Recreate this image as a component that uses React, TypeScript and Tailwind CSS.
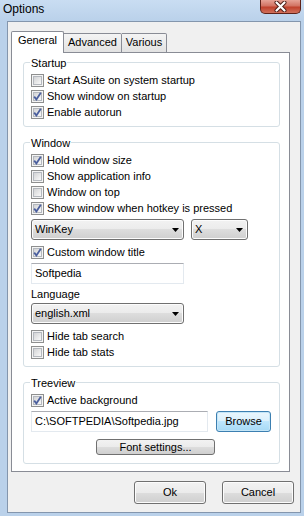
import React from 'react';

const Check = ({ checked, label }: { checked?: boolean; label: string }) => (
  <div className="flex items-center h-[16px] gap-[3px]">
    <span className="relative flex w-[13px] h-[13px] shrink-0 border border-[#8e8f8f] bg-[#f4f4f4] p-[1px]">
      <span className="flex-1 border border-[#b4b8be] bg-[linear-gradient(135deg,#d2d3d5,#f9f9f9)]" />
      {checked && (
        <svg className="absolute left-[-1px] top-[-1px]" width="13" height="13" viewBox="0 0 13 13">
          <path d="M3.2 6.6 L5.4 9.4 L9.8 2.8" fill="none" stroke="#4b5f9e" strokeWidth="1.8" />
        </svg>
      )}
    </span>
    <span className="leading-[16px]">{label}</span>
  </div>
);

const Arrow = () => (
  <svg width="7" height="4" viewBox="0 0 7 4">
    <path d="M0 0 H7 L3.5 4 Z" fill="#000" />
  </svg>
);

const Group = ({ title, className, children }: { title: string; className: string; children: React.ReactNode }) => (
  <div className={`ml-[11px] w-[257px] border border-[#d5dfe5] rounded-[3px] pl-[7px] ${className}`}>
    <span className="block w-fit -mt-[6px] -ml-px px-px bg-white leading-[13px]">{title}</span>
    <div className="mt-[2px]">{children}</div>
  </div>
);

export default function App() {
  return (
    <div className="w-[304px] h-[516px] bg-[#bad1ea] flex flex-col text-[11px] text-black font-['Liberation_Sans',Arial,sans-serif]">
      {/* title bar */}
      <div className="h-[21px] flex justify-between bg-[linear-gradient(#c9ddf2,#bad1ea)]">
        <span className="pl-[3px] pt-[2px] text-[12px] leading-[15px]">Options</span>
        <div className="mr-[3px] w-[41px] h-[14px] rounded-b-[5px] border border-t-0 border-[#5e2219] bg-[linear-gradient(#e6a396,#d27363_45%,#c0412c_55%,#d0705b)] flex items-center justify-center">
          <svg width="13" height="11" viewBox="0 0 13 11">
            <path d="M2.5 1.5 L10.5 9.5 M10.5 1.5 L2.5 9.5" stroke="#4a1b14" strokeWidth="4" strokeLinecap="round" />
            <path d="M2.5 1.5 L10.5 9.5 M10.5 1.5 L2.5 9.5" stroke="#fff" strokeWidth="2.2" strokeLinecap="round" />
          </svg>
        </div>
      </div>

      {/* client */}
      <div className="ml-[7px] w-[294px] h-[492px] border border-[#8496ad] bg-[#f0f0f0] pl-[3px] pt-[9px]">
        <div className="relative z-10 flex items-end h-[22px] -mb-px">
          <div className="w-[53px] h-[22px] bg-white border border-b-0 border-[#898c95] rounded-t-[2px] flex justify-center pt-[2px] leading-[13px]">
            General
          </div>
          <div className="w-[58px] h-[20px] border border-l-0 border-[#898c95] rounded-tr-[2px] bg-[linear-gradient(#f4f4f4,#e2e2e2)] flex justify-center pt-[2px] leading-[13px]">
            Advanced
          </div>
          <div className="w-[45px] h-[20px] border border-l-0 border-[#898c95] rounded-tr-[2px] bg-[linear-gradient(#f4f4f4,#e2e2e2)] flex justify-center pt-[2px] leading-[13px]">
            Various
          </div>
        </div>

        <div className="w-[279px] h-[420px] bg-white border border-[#898c95] pt-[9px]">
          <Group title="Startup" className="pb-[6px]">
            <Check label="Start ASuite on system startup" />
            <Check checked label="Show window on startup" />
            <Check checked label="Enable autorun" />
          </Group>

          <Group title="Window" className="mt-[15px] pb-[6px]">
            <Check checked label="Hold window size" />
            <Check label="Show application info" />
            <Check label="Window on top" />
            <Check checked label="Show window when hotkey is pressed" />
            <div className="flex gap-[7px] mt-[3px]">
              <div className="w-[153px] h-[21px] border border-[#707070] rounded-[3px] bg-[linear-gradient(#f2f2f2,#ebebeb_50%,#dddddd_50%,#cfcfcf)] shadow-[inset_0_0_0_1px_#fcfcfc] flex items-center justify-between pl-[3px] pr-[4px]">
                <span>WinKey</span>
                <Arrow />
              </div>
              <div className="w-[57px] h-[21px] border border-[#707070] rounded-[3px] bg-[linear-gradient(#f2f2f2,#ebebeb_50%,#dddddd_50%,#cfcfcf)] shadow-[inset_0_0_0_1px_#fcfcfc] flex items-center justify-between pl-[3px] pr-[4px]">
                <span>X</span>
                <Arrow />
              </div>
            </div>
            <div className="mt-[4px]">
              <Check checked label="Custom window title" />
            </div>
            <div className="mt-[3px] w-[153px] h-[21px] border border-[#e3e9ef] border-t-[#abadb3] bg-white flex items-center pl-[3px]">
              Softpedia
            </div>
            <div className="mt-[4px] leading-[13px]">Language</div>
            <div className="mt-[2px] w-[153px] h-[21px] border border-[#707070] rounded-[3px] bg-[linear-gradient(#f2f2f2,#ebebeb_50%,#dddddd_50%,#cfcfcf)] shadow-[inset_0_0_0_1px_#fcfcfc] flex items-center justify-between pl-[3px] pr-[4px]">
              <span>english.xml</span>
              <Arrow />
            </div>
            <div className="mt-[4px]">
              <Check label="Hide tab search" />
              <Check label="Hide tab stats" />
            </div>
          </Group>

          <Group title="Treeview" className="mt-[15px] pb-[8px]">
            <Check checked label="Active background" />
            <div className="mt-[3px] flex gap-[8px]">
              <div className="w-[177px] h-[21px] border border-[#e3e9ef] border-t-[#abadb3] bg-white flex items-center pl-[3px]">
                C:\SOFTPEDIA\Softpedia.jpg
              </div>
              <div className="w-[55px] h-[21px] border border-[#3c7fb1] rounded-[3px] bg-[linear-gradient(#eaf6fd,#d9f0fc_50%,#bee6fd_50%,#a7d9f5)] shadow-[inset_0_0_0_1px_#c5e6f7] flex items-center justify-center">
                Browse
              </div>
            </div>
            <div className="mt-[7px] ml-[65px] w-[119px] h-[16px] border border-[#707070] rounded-[3px] bg-[linear-gradient(#f2f2f2,#ebebeb_50%,#dddddd_50%,#cfcfcf)] flex items-center justify-center leading-[14px]">
              Font settings...
            </div>
          </Group>
        </div>

        <div className="mt-[9px] flex justify-end gap-[16px] mr-[6px]">
          <div className="w-[72px] h-[23px] border border-[#707070] rounded-[3px] bg-[linear-gradient(#f2f2f2,#ebebeb_50%,#dddddd_50%,#cfcfcf)] shadow-[inset_0_0_0_1px_#fcfcfc] flex items-center justify-center">
            Ok
          </div>
          <div className="w-[72px] h-[23px] border border-[#707070] rounded-[3px] bg-[linear-gradient(#f2f2f2,#ebebeb_50%,#dddddd_50%,#cfcfcf)] shadow-[inset_0_0_0_1px_#fcfcfc] flex items-center justify-center">
            Cancel
          </div>
        </div>
      </div>
    </div>
  );
}
